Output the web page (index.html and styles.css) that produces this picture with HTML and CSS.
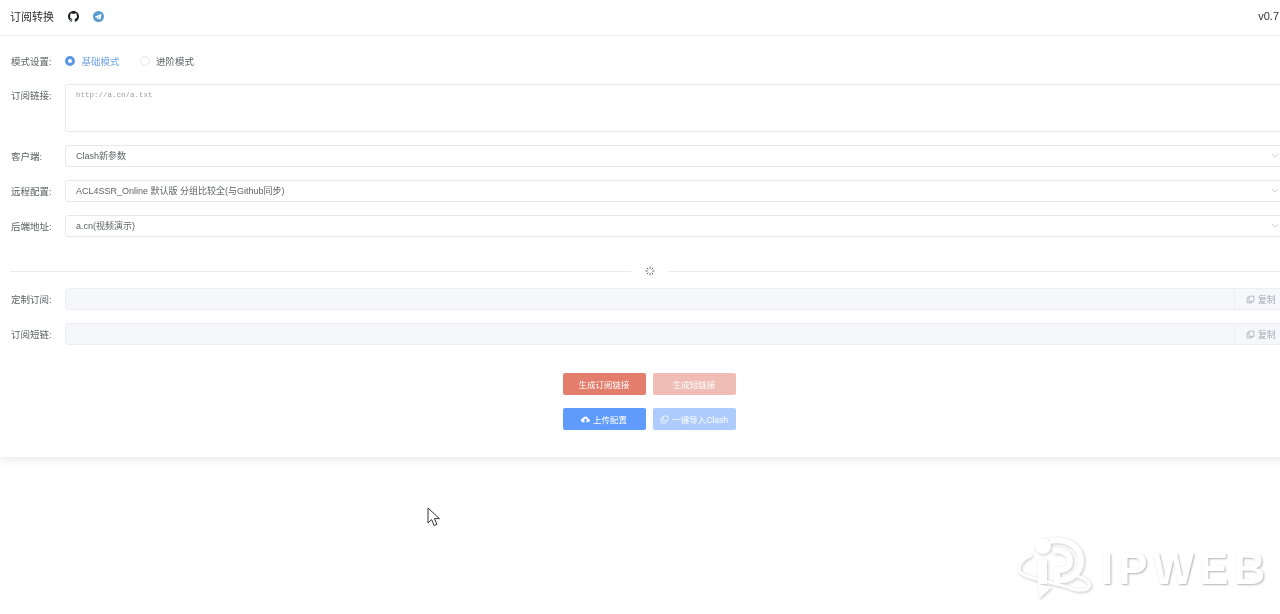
FILE: index.html
```html
<!DOCTYPE html>
<html lang="zh-CN">
<head>
    <meta charset="UTF-8">
    <meta name="viewport" content="width=device-width, initial-scale=1.0">
    <title>订阅转换</title>
    <link rel="stylesheet" href="styles.css">
</head>
<body>
    <div class="card">
        <div class="card-header">
            <span class="title">订阅转换</span>
            <svg class="icon-github" viewBox="0 0 16 16"><path fill="#1b1f23" d="M8 0C3.58 0 0 3.58 0 8c0 3.54 2.29 6.53 5.47 7.59.4.07.55-.17.55-.38 0-.19-.01-.82-.01-1.49-2.01.37-2.53-.49-2.69-.94-.09-.23-.48-.94-.82-1.13-.28-.15-.68-.52-.01-.53.63-.01 1.08.58 1.23.82.72 1.21 1.87.87 2.33.66.07-.52.28-.87.51-1.07-1.78-.2-3.64-.89-3.64-3.95 0-.87.31-1.59.82-2.15-.08-.2-.36-1.02.08-2.12 0 0 .67-.21 2.2.82.64-.18 1.32-.27 2-.27.68 0 1.36.09 2 .27 1.53-1.04 2.2-.82 2.2-.82.44 1.1.16 1.92.08 2.12.51.56.82 1.27.82 2.15 0 3.07-1.87 3.75-3.65 3.95.29.25.54.73.54 1.48 0 1.07-.01 1.93-.01 2.2 0 .21.15.46.55.38A8.013 8.013 0 0016 8c0-4.42-3.58-8-8-8z"/></svg>
            <svg class="icon-telegram" viewBox="0 0 16 16"><circle cx="8" cy="8" r="8" fill="#5a9bcf"/><path fill="#fff" d="M3.2 7.9l8.6-3.4c.4-.1.7.1.6.7l-1.5 6.9c-.1.5-.4.6-.8.4L7.8 10.9l-1.1 1.1c-.2.2-.3.2-.5-.1l-.5-2.1-2.4-.8c-.5-.2-.5-.6-.1-1zm3 1.9l.4 1.6.2-1.2 3.6-3.4-4.2 3z"/></svg>
            <span class="version">v0.7</span>
        </div>

        <div class="form">
            <div class="row row-mode">
                <span class="label">模式设置:</span>
                <span class="radio active"><i></i>基础模式</span>
                <span class="radio"><i></i>进阶模式</span>
            </div>
            <div class="row row-top">
                <span class="label">订阅链接:</span>
                <div class="textarea">http://a.cn/a.txt</div>
            </div>
            <div class="row">
                <span class="label">客户端:</span>
                <div class="field">Clash新参数<svg class="chevron" viewBox="0 0 10 6"><path d="M1 1l4 4 4-4"/></svg></div>
            </div>
            <div class="row">
                <span class="label">远程配置:</span>
                <div class="field">ACL4SSR_Online 默认版 分组比较全(与Github同步)<svg class="chevron" viewBox="0 0 10 6"><path d="M1 1l4 4 4-4"/></svg></div>
            </div>
            <div class="row">
                <span class="label">后端地址:</span>
                <div class="field">a.cn(视频演示)<svg class="chevron" viewBox="0 0 10 6"><path d="M1 1l4 4 4-4"/></svg></div>
            </div>

            <div class="divider">
                <span class="divider-icon">
                    <svg viewBox="0 0 12 12"><path d="M6 .8v2.400M6 8.800v2.400M.8 6h2.400M8.800 6h2.400M2.300 2.300L4 4M8 8l1.700 1.700M2.300 9.700L4 8M8 4l1.700-1.700"/></svg>
                </span>
            </div>

            <div class="row">
                <span class="label">定制订阅:</span>
                <div class="field disabled">
                    <span class="copy"><svg viewBox="0 0 12 12"><path d="M4 1.500h6.500v7H4zM4 3.500H1.500v7H8V8.500"/></svg>复制</span>
                </div>
            </div>
            <div class="row">
                <span class="label">订阅短链:</span>
                <div class="field disabled">
                    <span class="copy"><svg viewBox="0 0 12 12"><path d="M4 1.500h6.500v7H4zM4 3.500H1.500v7H8V8.500"/></svg>复制</span>
                </div>
            </div>

            <div class="actions">
                <div class="btn-row">
                    <span class="btn red">生成订阅链接</span>
                    <span class="btn red faded">生成短链接</span>
                </div>
                <div class="btn-row">
                    <span class="btn blue"><svg class="btn-icon" viewBox="0 0 12 12"><path fill="#fff" d="M9.600 4.900A3.700 3.700 0 002.500 4.300 2.500 2.500 0 003 9.700h1.800V7.300H3.400L6 4.800l2.600 2.500H7.200v2.400h2.100a2.400 2.400 0 00.3-4.800z"/></svg>上传配置</span>
                    <span class="btn blue faded"><svg class="btn-icon outline" viewBox="0 0 12 12"><path d="M4 1.500h6.500v6H4zM4 4H1.500v6.500H8V8"/></svg>一键导入Clash</span>
                </div>
            </div>
        </div>
    </div>

    <!-- pointer from the recording -->
    <svg class="pointer" viewBox="0 0 14 20"><path d="M1 1v15l3.600-3.400 2.500 6 2.800-1.200-2.500-5.800h5z"/></svg>

    <!-- watermark -->
    <div class="watermark">
        <svg class="watermark-logo" viewBox="0 0 78 66">
            <circle cx="27" cy="10" r="8" class="solid"/>
            <path class="solid" d="M22 24h9v24h-9z"/>
            <path class="line" d="M34 5c16-3 31 5 31 20 0 13-12 21-24 19V34c7 1 13-2 13-9 0-8-9-12-17-10"/>
            <path class="line thin" d="M16 19C5 24 1 31 4 36c4 6 30 9 50 16 8 3 16 3 19-1 2-4-3-8-12-11"/>
            <path class="solid" d="M22 48l14 3-13 12z"/>
        </svg>
        <span class="watermark-text">IPWEB</span>
    </div>
</body>
</html>
```

FILE: styles.css
```css
html, body {
    margin: 0;
    height: 614px;
    overflow: hidden;
    background-color: #fff;
}
body {
    font-family: "Liberation Sans", "Noto Sans CJK SC", sans-serif;
    font-size: 9.5px;
    color: #606266;
    position: relative;
    filter: blur(0.4px);
}
.card {
    width: 1299px;
    height: 457px;
    box-sizing: border-box;
    box-shadow: 0 2px 10px rgba(0, 0, 0, 0.1);
    background-color: #fff;
}
.card-header {
    height: 32px;
    padding: 0 20px 3px 10px;
    display: flex;
    align-items: center;
    border-bottom: 1px solid #ebeef5;
    color: #303133;
}
.title {
    font-size: 11px;
}
.icon-github {
    width: 11px;
    height: 11px;
    margin-left: 14px;
}
.icon-telegram {
    width: 11px;
    height: 11px;
    margin-left: 14px;
}
.version {
    margin-left: auto;
    font-size: 11px;
}
.form {
    padding: 13px 11px 0 10px;
    display: flex;
    flex-direction: column;
    gap: 13px;
}
.row {
    display: flex;
    align-items: center;
    min-height: 22px;
}
.row-mode {
    padding-top: 1px;
    margin-bottom: -1px;
}
.row-top {
    align-items: flex-start;
}
.row-top .label {
    line-height: 24px;
}
.label {
    width: 54px;
    padding-left: 1px;
    flex-shrink: 0;
}
.radio {
    display: flex;
    align-items: center;
    gap: 6.5px;
    margin-right: 20px;
}
.row-mode .radio:first-of-type {
    margin-left: 0.5px;
}
.radio i {
    width: 10px;
    height: 10px;
    box-sizing: border-box;
    border: 1px solid #e4e7ed;
    border-radius: 50%;
    background-color: #fff;
}
.radio.active {
    color: #6ea3e6;
}
.radio.active i {
    border: 3px solid #5c97e6;
}
.textarea {
    flex: 1;
    height: 48px;
    box-sizing: border-box;
    padding: 5px 10px;
    border: 1px solid #e6e8ee;
    border-radius: 3px;
    font-family: "Liberation Mono", monospace;
    font-size: 7.5px;
    line-height: 11px;
    color: #9a9ea6;
}
.field {
    flex: 1;
    height: 22px;
    box-sizing: border-box;
    padding: 0 10px 1px;
    display: flex;
    align-items: center;
    justify-content: space-between;
    border: 1px solid #e6e8ee;
    border-radius: 3px;
    font-size: 9px;
}
.chevron {
    width: 8px;
    height: 5px;
    margin-right: -2px;
    fill: none;
    stroke: #c0c4cc;
    stroke-width: 1;
}
.field.disabled {
    background-color: #f5f7fa;
    border-color: #eceef2;
    justify-content: flex-end;
    padding: 0;
}
.copy {
    height: 100%;
    width: 53px;
    box-sizing: border-box;
    padding-left: 11px;
    display: flex;
    align-items: center;
    gap: 3px;
    font-size: 8.8px;
    color: #a6a9ae;
    background-color: #f5f7fa;
    border-left: 1px solid #eceef2;
}
.copy svg {
    width: 9px;
    height: 9px;
    fill: none;
    stroke: #a6a9ae;
    stroke-width: 1;
}
.divider {
    height: 1px;
    margin: 21px 0 3px;
    background-color: #e9ebf0;
    position: relative;
}
.divider-icon {
    position: absolute;
    left: 621px;
    top: -6px;
    width: 37px;
    height: 12px;
    display: flex;
    justify-content: center;
    background-color: #fff;
}
.divider-icon svg {
    width: 10px;
    height: 10px;
    margin-top: 1px;
    fill: none;
    stroke: #555a60;
    stroke-width: 1.2;
}
.actions {
    margin: 15px 0 0 -10px;
    width: 1298px;
    display: flex;
    flex-direction: column;
    align-items: center;
    gap: 13px;
}
.btn-row {
    display: flex;
    gap: 7px;
}
.btn {
    width: 83px;
    height: 22px;
    display: flex;
    align-items: center;
    justify-content: center;
    gap: 3px;
    border-radius: 2px;
    font-size: 8.5px;
    color: #fff;
}
.btn.red {
    background-color: #e47e6c;
}
.btn.red.faded {
    background-color: #efbdb5;
}
.btn.blue {
    background-color: #5f9bfb;
}
.btn.blue.faded {
    background-color: #adcbfd;
}
.btn-icon {
    width: 9px;
    height: 9px;
}
.btn-icon.outline {
    fill: none;
    stroke: #fff;
    stroke-width: 1;
}
.pointer {
    position: absolute;
    left: 427px;
    top: 507px;
    width: 14px;
    height: 20px;
    fill: #fff;
    stroke: #333;
    stroke-width: 1;
}
.watermark {
    position: absolute;
    left: 1016px;
    top: 536px;
    display: flex;
    align-items: center;
    gap: 7px;
}
.watermark-logo {
    width: 78px;
    height: 66px;
    filter: drop-shadow(1px 1px 1.500px rgba(0, 0, 0, 0.22));
}
.watermark-logo .solid {
    fill: #fff;
}
.watermark-logo .line {
    fill: none;
    stroke: #fff;
    stroke-width: 6;
}
.watermark-logo .line.thin {
    stroke-width: 3;
}
.watermark-text {
    font-size: 44px;
    font-weight: bold;
    line-height: 44px;
    letter-spacing: 5px;
    color: #fff;
    text-shadow: 1px 1px 2px rgba(0, 0, 0, 0.3);
}
```
